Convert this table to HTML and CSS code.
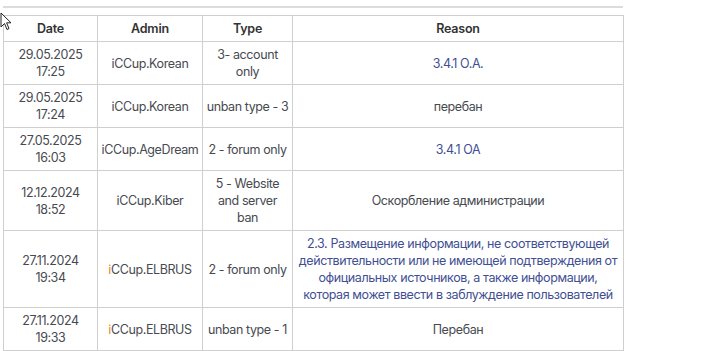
FILE: index.html
```html
<!DOCTYPE html>
<html>
<head>
<meta charset="utf-8">
<link rel="stylesheet" href="styles.css">
</head>
<body>
<div class="page">
  <hr class="rule">
  <table class="bans">
    <colgroup>
      <col class="c-date"><col class="c-admin"><col class="c-type"><col class="c-reason">
    </colgroup>
    <thead>
      <tr><th>Date</th><th>Admin</th><th>Type</th><th>Reason</th></tr>
    </thead>
    <tbody>
      <tr><td>29.05.2025<br>17:25</td><td>iCCup.Korean</td><td>3- account only</td><td class="link">3.4.1 O.A.</td></tr>
      <tr><td>29.05.2025<br>17:24</td><td>iCCup.Korean</td><td>unban type - 3</td><td>перебан</td></tr>
      <tr><td>27.05.2025<br>16:03</td><td>iCCup.AgeDream</td><td>2 - forum only</td><td class="link">3.4.1 OA</td></tr>
      <tr><td>12.12.2024<br>18:52</td><td>iCCup.Kiber</td><td>5 - Website<br>and server<br>ban</td><td>Оскорбление администрации</td></tr>
      <tr><td>27.11.2024<br>19:34</td><td><span class="hl">i</span>CCup.ELBRUS</td><td>2 - forum only</td><td class="link">2.3. Размещение информации, не соответствующей действительности или не имеющей подтверждения от официальных источников, а также информации, которая может ввести в заблуждение пользователей</td></tr>
      <tr><td>27.11.2024<br>19:33</td><td><span class="hl">i</span>CCup.ELBRUS</td><td>unban type - 1</td><td>Перебан</td></tr>
    </tbody>
  </table>
  <svg class="cursor" width="12" height="20" viewBox="0 0 12 20"><path d="M1 1 L1 15 L4.5 11.5 L7 17.5 L9 16.6 L6.6 10.8 L11 10.8 Z" fill="#fff" stroke="#222" stroke-width="1"/></svg>
</div>
</body>
</html>
```
FILE: styles.css
```css
html, body { margin: 0; padding: 0; background: #fff; }
.page {
  position: relative;
  padding: 6px 0 0 3px;
  width: 620px;
  font-family: Inter, "Noto Sans", sans-serif;
  font-size: 12.5px;
  letter-spacing: -0.4px;
  line-height: 17px;
  color: #474a50;
}
.rule {
  margin: 0 0 7px 0;
  border: 0;
  border-top: 2px solid #dcdcdc;
  height: 0;
}
.bans {
  border-collapse: collapse;
  width: 620px;
  table-layout: fixed;
}
.c-date { width: 94px; }
.c-admin { width: 105px; }
.c-type { width: 90px; }
.c-reason { width: 331px; }
.bans th, .bans td {
  border: 1px solid #cfcfcf;
  padding: 4px 2px;
  text-align: center;
  vertical-align: middle;
}
.bans th { font-weight: 600; color: #333; letter-spacing: -0.2px; }
.link { color: #3f4f93; }
.hl { color: #e08a1e; }
.cursor { position: absolute; left: 0; top: 12px; }
```
